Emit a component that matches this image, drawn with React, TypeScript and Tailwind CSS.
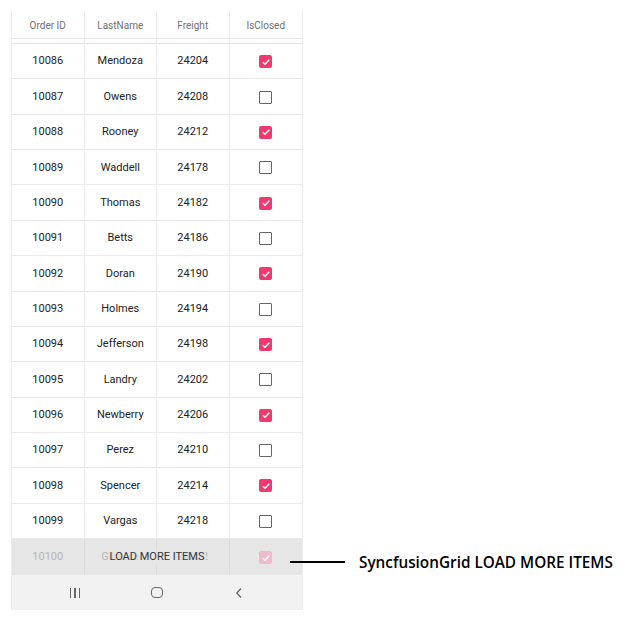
import React from "react";

const rows: [string, string, string, boolean][] = [
  ["10086", "Mendoza", "24204", true],
  ["10087", "Owens", "24208", false],
  ["10088", "Rooney", "24212", true],
  ["10089", "Waddell", "24178", false],
  ["10090", "Thomas", "24182", true],
  ["10091", "Betts", "24186", false],
  ["10092", "Doran", "24190", true],
  ["10093", "Holmes", "24194", false],
  ["10094", "Jefferson", "24198", true],
  ["10095", "Landry", "24202", false],
  ["10096", "Newberry", "24206", true],
  ["10097", "Perez", "24210", false],
  ["10098", "Spencer", "24214", true],
  ["10099", "Vargas", "24218", false],
];

function Check({ on, faded }: { on: boolean; faded?: boolean }) {
  if (on) {
    return (
      <div
        className={
          "w-[13px] h-[13px] rounded-[2px] flex items-center justify-center " +
          (faded ? "bg-[#f2b9cb]" : "bg-[#f2386f]")
        }
      >
        <svg width="10" height="10" viewBox="0 0 10 10">
          <path d="M1.8 5.2 L4 7.3 L8.3 2.8" fill="none" stroke="white" strokeWidth="1.5" />
        </svg>
      </div>
    );
  }
  return <div className="w-[13px] h-[13px] rounded-[1px] border-[1.5px] border-[#666]" />;
}

export default function App() {
  return (
    <div className="relative w-[630px] h-[620px] bg-white" style={{ fontFamily: "Roboto, sans-serif" }}>
      <div className="absolute left-[11px] top-[11px] w-[292px] border-x border-[#ececec] flex flex-col">
        <div className="grid grid-cols-4 h-[28px] pt-[1px] border-b border-[#eaeaea] text-[10px] text-[#707070]">
          {["Order ID", "LastName", "Freight", "IsClosed"].map((h, i) => (
            <div key={h} className={"flex items-center justify-center " + (i < 3 ? "border-r border-[#ececec]" : "")}>
              {h}
            </div>
          ))}
        </div>
        <div className="grid grid-cols-4 h-[5px] border-b border-[#e6e6e6]">
          {[0, 1, 2, 3].map((i) => (
            <div key={i} className={i < 3 ? "border-r border-[#ececec]" : ""} />
          ))}
        </div>
        {rows.map(([id, name, fr, c]) => (
          <div key={id} className="grid grid-cols-4 h-[35.36px] pt-[1px] border-b border-[#ebebeb] text-[11px] text-[#222]">
            <div className="flex items-center justify-center border-r border-[#ececec]">{id}</div>
            <div className="flex items-center justify-center border-r border-[#ececec]">{name}</div>
            <div className="flex items-center justify-center border-r border-[#ececec]">{fr}</div>
            <div className="flex items-center justify-center">
              <Check on={c} />
            </div>
          </div>
        ))}
        <div className="relative h-[36px] pt-[1px] bg-[#e6e6e6]">
          <div className="grid grid-cols-4 h-full text-[11px] text-[#b5b5b5]">
            <div className="flex items-center justify-center border-r border-[#dcdcdc]">10100</div>
            <div className="flex items-center justify-center border-r border-[#dcdcdc]">Gilmore</div>
            <div className="flex items-center justify-center border-r border-[#dcdcdc]">24222</div>
            <div className="flex items-center justify-center">
              <Check on faded />
            </div>
          </div>
          <div className="absolute inset-0 pt-[1px] flex items-center justify-center text-[11px] text-[#333]">
            <span className="bg-[#e6e6e6]/70 px-[2px]">LOAD MORE ITEMS</span>
          </div>
        </div>
        <div className="h-[35px] bg-[#f2f2f2] flex justify-center items-center gap-[70px]">
          <div className="w-[12px] flex justify-center gap-[3px]">
            <div className="w-[1.3px] h-[10px] bg-[#666]" />
            <div className="w-[1.3px] h-[10px] bg-[#666]" />
            <div className="w-[1.3px] h-[10px] bg-[#666]" />
          </div>
          <div className="w-[12px] flex justify-center">
            <div className="w-[12px] h-[11px] rounded-[4px] border-[1.3px] border-[#666]" />
          </div>
          <div className="w-[12px] flex justify-center">
            <svg width="10" height="12" viewBox="0 0 10 12">
              <path d="M7 1.5 L2.8 6 L7 10.5" fill="none" stroke="#666" strokeWidth="1.3" />
            </svg>
          </div>
        </div>
      </div>
      <div className="absolute left-[290px] top-[561px] w-[55px] h-[2px] bg-black" />
      <div
        className="absolute left-[359px] top-[551px] text-[15.3px] font-semibold text-black leading-[22px] whitespace-nowrap"
        style={{ fontFamily: "'Open Sans', sans-serif" }}
      >
        SyncfusionGrid LOAD MORE ITEMS
      </div>
    </div>
  );
}
